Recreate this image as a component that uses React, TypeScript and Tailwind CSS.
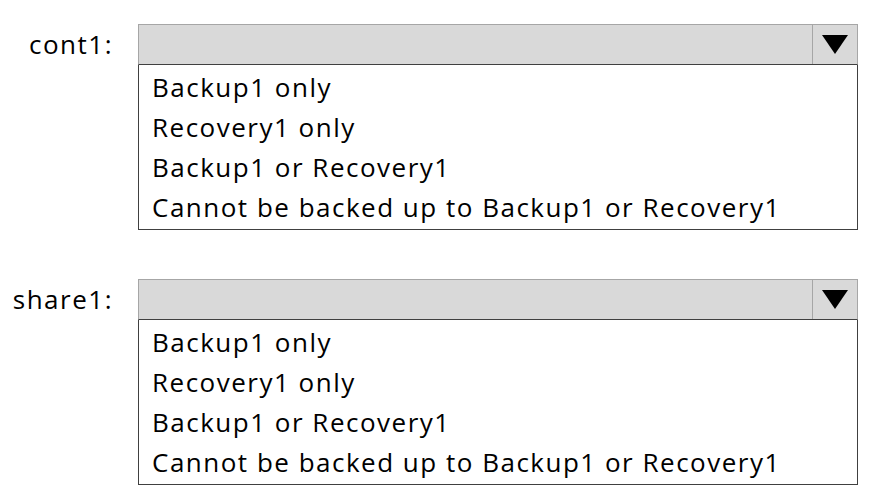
import React from 'react'

const options = [
  'Backup1 only',
  'Recovery1 only',
  'Backup1 or Recovery1',
  'Cannot be backed up to Backup1 or Recovery1',
]

function Dropdown(props: { label: string }) {
  return (
    <div className="flex items-start">
      <div className="w-[113px] h-[40px] flex items-center justify-end text-[26px] tracking-[1.5px] text-black">
        {props.label}
      </div>
      <div className="ml-[25px] w-[720px]">
        <div className="h-[41px] flex bg-[#d9d9d9] border border-[#a6a6a6] border-b-[#404040]">
          <div className="flex-1" />
          <div className="w-[45px] flex items-center justify-center border-l border-[#a6a6a6]">
            <svg width="26" height="19" viewBox="0 0 26 19">
              <polygon points="0,0 26,0 13,19" fill="#000" />
            </svg>
          </div>
        </div>
        <div className="border border-t-0 border-[#404040] pl-[13px] pt-[3px] pb-[1px]">
          {options.map((val, index) => (
            <div key={index} className="h-[40px] leading-[38px] text-[26px] tracking-[1.5px] text-black whitespace-nowrap">
              {val}
            </div>
          ))}
        </div>
      </div>
    </div>
  )
}

export default function App() {
  return (
    <div className="w-[873px] h-[504px] bg-white pt-[24px] flex flex-col gap-[49px]" style={{ fontFamily: '"Open Sans", Lato, sans-serif' }}>
      <Dropdown label="cont1:" />
      <Dropdown label="share1:" />
    </div>
  )
}
